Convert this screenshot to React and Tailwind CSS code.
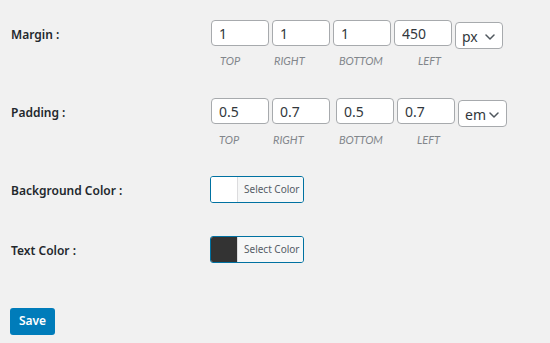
import React from "react";

function Chevron() {
  return (
    <svg width="10" height="6" viewBox="0 0 10 6" fill="none" className="shrink-0">
      <path d="M1 1l4 4 4-4" stroke="#50575e" strokeWidth="1.5" strokeLinecap="round" strokeLinejoin="round" />
    </svg>
  );
}

function Field({ value, extra = "" }) {
  return (
    <input
      readOnly
      value={value}
      className={`h-[26px] w-[58px] rounded-[4px] border border-[#a7aaad] bg-white px-[7px] text-[14px] text-[#32373c] outline-none font-['Noto_Sans',sans-serif] ${extra}`}
    />
  );
}

function Unit({ label, width }) {
  return (
    <div
      className={`mt-[2px] flex h-[27px] items-center justify-between rounded-[4px] border border-[#a7aaad] bg-white pl-[6px] pr-[7px] pt-[2px] text-[14px] text-[#32373c] ${width}`}
    >
      <span>{label}</span>
      <Chevron />
    </div>
  );
}

function Sub({ children, w }) {
  return (
    <span className={`${w} shrink-0 font-['Lato',sans-serif] text-[11px] italic leading-[14px] text-[#82868b]`}>
      {children}
    </span>
  );
}

function Label({ children }) {
  return (
    <div className="w-[210px] shrink-0 whitespace-nowrap pl-[11px] pt-[6px] text-[12px] font-semibold leading-[18px] text-[#23282d]">
      {children}
    </div>
  );
}

function ColorButton({ swatch }) {
  return (
    <div className="flex h-[27px] w-[94px] overflow-hidden rounded-[3px] border border-[#0071a1]">
      <div className={`w-[27px] shrink-0 border-r border-[#dcdcde] ${swatch}`} />
      <div className="flex flex-1 items-center whitespace-nowrap bg-[#f6f7f7] pl-[6px] text-[10px] text-[#555d66]">
        Select Color
      </div>
    </div>
  );
}

export default function App() {
  return (
    <div className="min-h-screen w-full bg-[#f1f1f1] font-['Noto_Sans',sans-serif] text-[#23282d]">
      <div className="flex flex-col pt-[20px]">
        {/* Margin */}
        <div className="flex">
          <Label>Margin :</Label>
          <div className="flex flex-col pl-[1px]">
            <div className="flex items-start gap-[3px]">
              <Field value="1" />
              <Field value="1" />
              <Field value="1" />
              <Field value="450" />
              <Unit label="px" width="w-[48px]" />
            </div>
            <div className="mt-[5px] flex pl-[9px]">
              <Sub w="w-[54px]">TOP</Sub>
              <Sub w="w-[65px]">RIGHT</Sub>
              <Sub w="w-[79px]">BOTTOM</Sub>
              <Sub w="w-[30px]">LEFT</Sub>
            </div>
          </div>
        </div>

        {/* Padding */}
        <div className="mt-[30px] flex">
          <Label>Padding :</Label>
          <div className="flex flex-col pl-[1px]">
            <div className="flex items-start gap-[3px]">
              <Field value="0.5" />
              <Field value="0.7" />
              <Field value="0.5" extra="ml-[3px]" />
              <Field value="0.7" />
              <Unit label="em" width="w-[49px]" />
            </div>
            <div className="mt-[6px] flex pl-[8px]">
              <Sub w="w-[54px]">TOP</Sub>
              <Sub w="w-[66px]">RIGHT</Sub>
              <Sub w="w-[78px]">BOTTOM</Sub>
              <Sub w="w-[30px]">LEFT</Sub>
            </div>
          </div>
        </div>

        {/* Background color */}
        <div className="mt-[29px] flex">
          <Label>Background Color :</Label>
          <ColorButton swatch="bg-white" />
        </div>

        {/* Text color */}
        <div className="mt-[33px] flex">
          <Label>Text Color :</Label>
          <ColorButton swatch="bg-[#333333]" />
        </div>

        <div className="mt-[44px] pl-[10px]">
          <button className="h-[27px] w-[45px] rounded-[3px] bg-[#007cba] text-[12px] font-semibold text-white">
            Save
          </button>
        </div>
      </div>
    </div>
  );
}
